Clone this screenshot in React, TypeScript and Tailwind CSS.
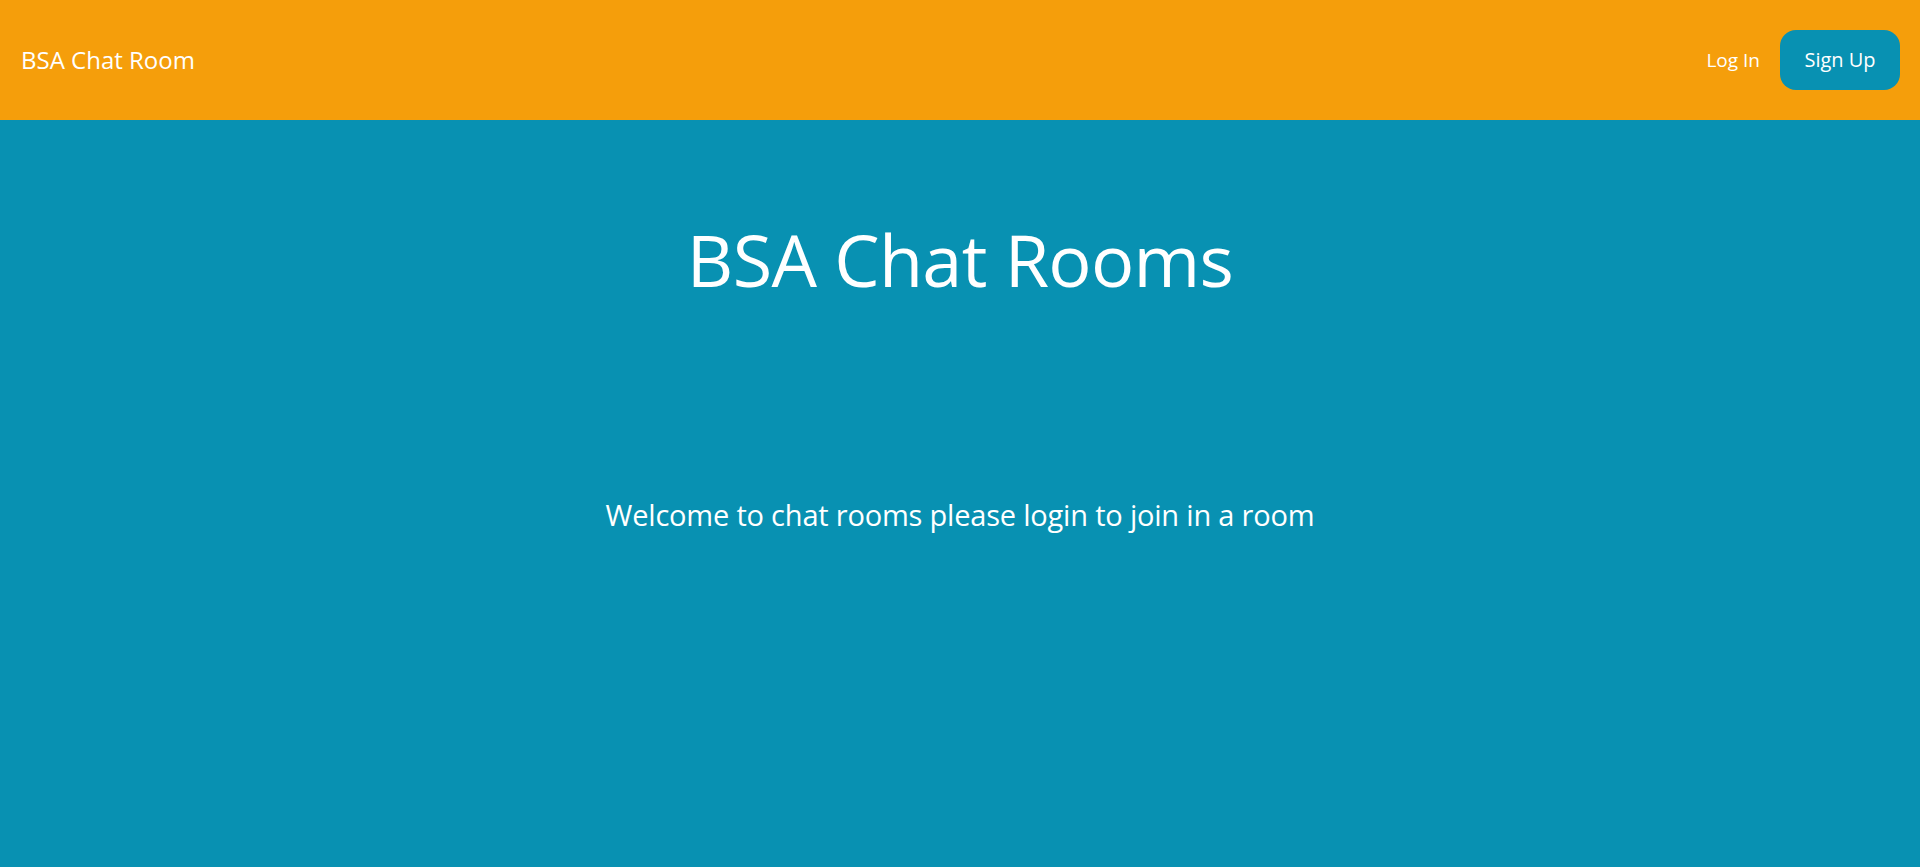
export default function App() {
  return (
    <div
      className="min-h-screen flex flex-col bg-[#0891b2] text-white"
      style={{ fontFamily: '"Open Sans", "Noto Sans", sans-serif' }}
    >
      <header className="h-[120px] bg-[#f59e0b] flex items-center justify-between pl-[21px] pr-[20px]">
        <a href="#" className="text-[24px]">
          BSA Chat Room
        </a>
        <nav className="flex items-center gap-[20px]">
          <a href="#" className="text-[19px]">
            Log In
          </a>
          <button className="w-[120px] h-[60px] rounded-2xl bg-[#0891b2] text-[20px]">
            Sign Up
          </button>
        </nav>
      </header>
      <main className="flex flex-col items-center pt-[103px]">
        <h1 className="text-[72px] leading-none tracking-[-0.7px]">BSA Chat Rooms</h1>
        <p className="mt-[205px] text-[29px] leading-none tracking-[-0.2px]">
          Welcome to chat rooms please login to join in a room
        </p>
      </main>
    </div>
  );
}
